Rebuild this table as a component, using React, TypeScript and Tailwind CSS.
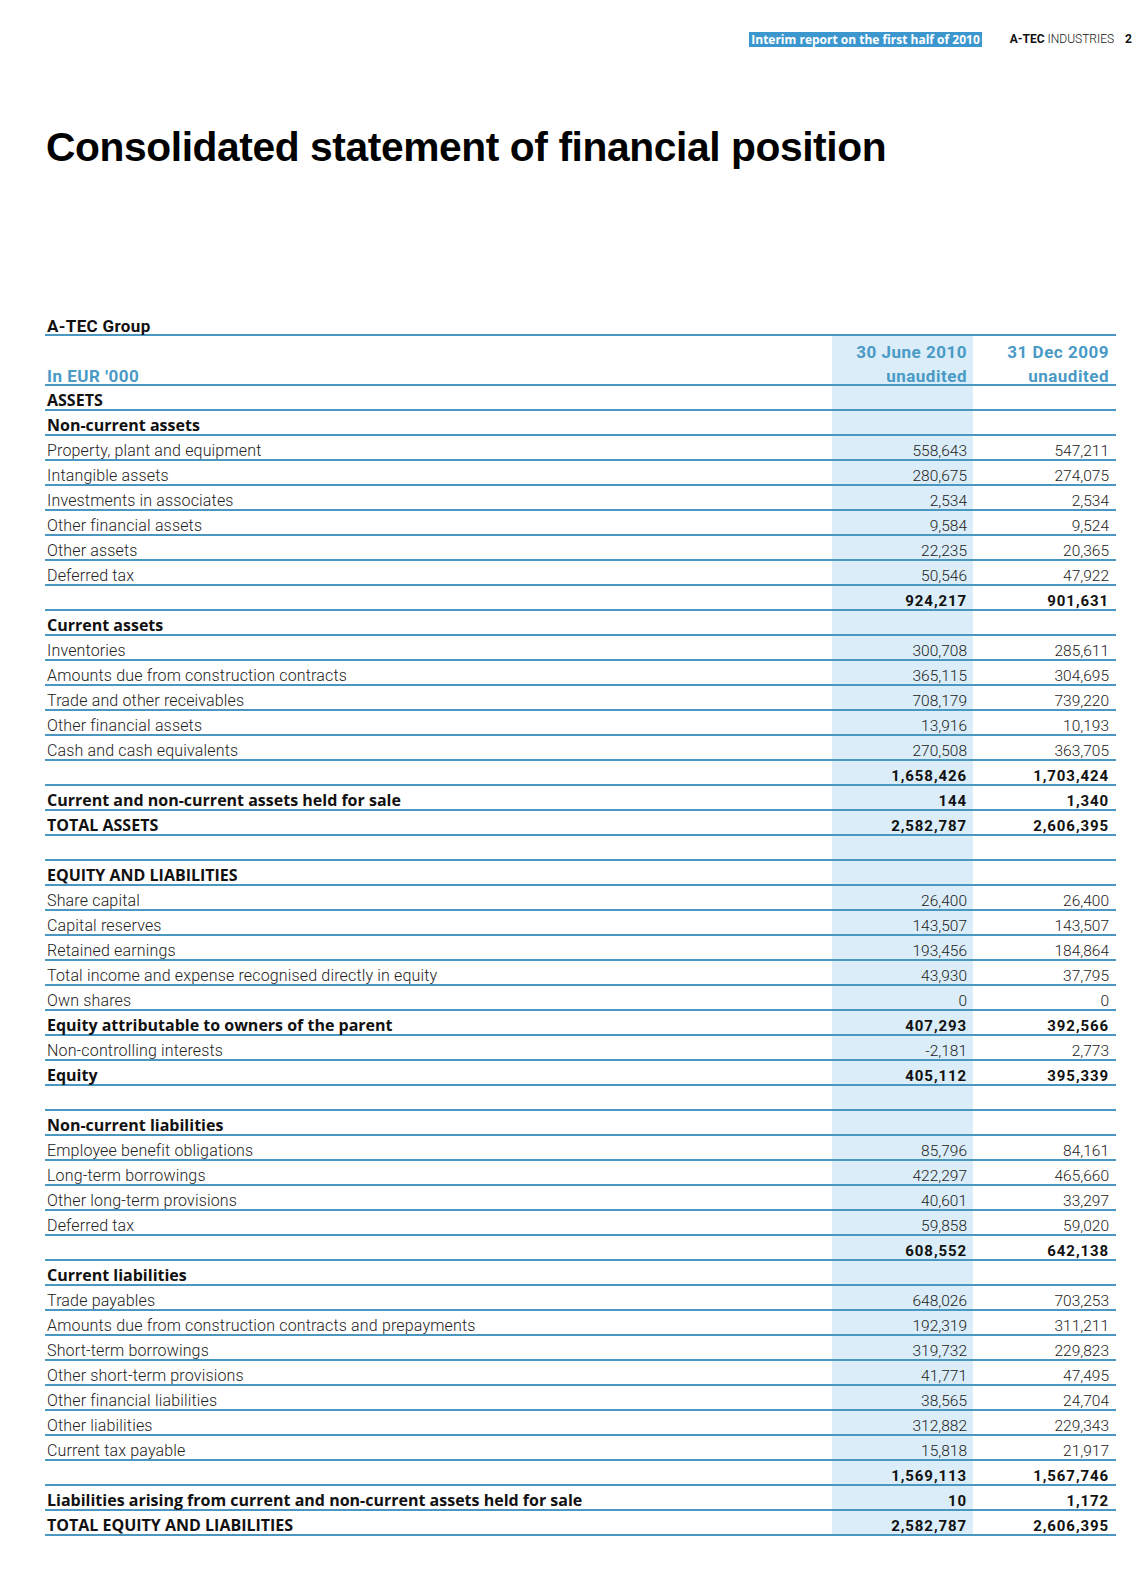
type RowKind = "head" | "item" | "sub" | "bold" | "blank";

interface Row {
  kind: RowKind;
  label?: string;
  a?: string;
  b?: string;
}

const rows: Row[] = [
  { kind: "head", label: "ASSETS" },
  { kind: "head", label: "Non-current assets" },
  { kind: "item", label: "Property, plant and equipment", a: "558,643", b: "547,211" },
  { kind: "item", label: "Intangible assets", a: "280,675", b: "274,075" },
  { kind: "item", label: "Investments in associates", a: "2,534", b: "2,534" },
  { kind: "item", label: "Other financial assets", a: "9,584", b: "9,524" },
  { kind: "item", label: "Other assets", a: "22,235", b: "20,365" },
  { kind: "item", label: "Deferred tax", a: "50,546", b: "47,922" },
  { kind: "sub", a: "924,217", b: "901,631" },
  { kind: "head", label: "Current assets" },
  { kind: "item", label: "Inventories", a: "300,708", b: "285,611" },
  { kind: "item", label: "Amounts due from construction contracts", a: "365,115", b: "304,695" },
  { kind: "item", label: "Trade and other receivables", a: "708,179", b: "739,220" },
  { kind: "item", label: "Other financial assets", a: "13,916", b: "10,193" },
  { kind: "item", label: "Cash and cash equivalents", a: "270,508", b: "363,705" },
  { kind: "sub", a: "1,658,426", b: "1,703,424" },
  { kind: "bold", label: "Current and non-current assets held for sale", a: "144", b: "1,340" },
  { kind: "bold", label: "TOTAL ASSETS", a: "2,582,787", b: "2,606,395" },
  { kind: "blank" },
  { kind: "head", label: "EQUITY AND LIABILITIES" },
  { kind: "item", label: "Share capital", a: "26,400", b: "26,400" },
  { kind: "item", label: "Capital reserves", a: "143,507", b: "143,507" },
  { kind: "item", label: "Retained earnings", a: "193,456", b: "184,864" },
  { kind: "item", label: "Total income and expense recognised directly in equity", a: "43,930", b: "37,795" },
  { kind: "item", label: "Own shares", a: "0", b: "0" },
  { kind: "bold", label: "Equity attributable to owners of the parent", a: "407,293", b: "392,566" },
  { kind: "item", label: "Non-controlling interests", a: "-2,181", b: "2,773" },
  { kind: "bold", label: "Equity", a: "405,112", b: "395,339" },
  { kind: "blank" },
  { kind: "head", label: "Non-current liabilities" },
  { kind: "item", label: "Employee benefit obligations", a: "85,796", b: "84,161" },
  { kind: "item", label: "Long-term borrowings", a: "422,297", b: "465,660" },
  { kind: "item", label: "Other long-term provisions", a: "40,601", b: "33,297" },
  { kind: "item", label: "Deferred tax", a: "59,858", b: "59,020" },
  { kind: "sub", a: "608,552", b: "642,138" },
  { kind: "head", label: "Current liabilities" },
  { kind: "item", label: "Trade payables", a: "648,026", b: "703,253" },
  { kind: "item", label: "Amounts due from construction contracts and prepayments", a: "192,319", b: "311,211" },
  { kind: "item", label: "Short-term borrowings", a: "319,732", b: "229,823" },
  { kind: "item", label: "Other short-term provisions", a: "41,771", b: "47,495" },
  { kind: "item", label: "Other financial liabilities", a: "38,565", b: "24,704" },
  { kind: "item", label: "Other liabilities", a: "312,882", b: "229,343" },
  { kind: "item", label: "Current tax payable", a: "15,818", b: "21,917" },
  { kind: "sub", a: "1,569,113", b: "1,567,746" },
  { kind: "bold", label: "Liabilities arising from current and non-current assets held for sale", a: "10", b: "1,172" },
  { kind: "bold", label: "TOTAL EQUITY AND LIABILITIES", a: "2,582,787", b: "2,606,395" },
];

function TableRow({ row }: { row: Row }) {
  const boldLabel = row.kind === "head" || row.kind === "bold";
  const boldNum = row.kind === "sub" || row.kind === "bold";
  const labelCls = boldLabel
    ? "pb-[2px] font-['Open_Sans',sans-serif] text-[16px] font-bold text-[#111]"
    : "pb-[1px] text-[16px] font-light tracking-[0.01em] text-[#222]";
  const numCls = boldNum
    ? "pb-[1px] text-[15px] font-bold tracking-[0.06em] text-[#111]"
    : "pb-[1px] text-[15.5px] font-light text-[#222]";

  return (
    <div className="grid h-[25px] grid-cols-[787px_141px_143px] border-b-2 border-[#4a98c2] leading-[14px]">
      <div className={`flex items-end whitespace-nowrap pl-[2px] ${labelCls}`}>
        {row.label}
      </div>
      <div className={`flex items-end justify-end bg-[#daedf8] pr-[6px] ${numCls}`}>
        {row.a}
      </div>
      <div className={`flex items-end justify-end pr-[7px] ${numCls}`}>
        {row.b}
      </div>
    </div>
  );
}

export default function App() {
  return (
    <div className="relative h-[1593px] w-[1132px] overflow-hidden bg-white font-['Roboto',sans-serif]">
      {/* running header */}
      <div className="flex items-center justify-end pt-[32px] text-[12px] leading-[15px]">
        <span className="bg-[#3d97cf] px-[2px] font-['Open_Sans',sans-serif] font-bold text-white">
          Interim report on the first half of 2010
        </span>
        <span className="ml-[28px] whitespace-nowrap text-[#111]">
          <span className="font-bold">A-TEC</span>{" "}
          <span className="font-light">INDUSTRIES</span>
        </span>
        <span className="ml-[11px] font-bold text-[#111]">2</span>
      </div>

      <h1 className="ml-[46px] mt-[80px] font-['Liberation_Sans',sans-serif] text-[40.75px] font-bold leading-[40px] tracking-[-0.01em] text-black">
        Consolidated statement of financial position
      </h1>

      <div className="ml-[45px] mt-[144px] w-[1071px]">
        <div className="flex h-[25px] items-end border-b-2 border-[#4a98c2] pl-[2px] text-[17px] font-bold leading-[16px] tracking-[0.02em] text-[#111]">
          A-TEC Group
        </div>
        <div className="grid h-[50px] grid-cols-[787px_141px_143px] border-b-2 border-[#4a98c2] text-[17px] font-bold leading-[24px] tracking-[0.03em] text-[#4a9ac6]">
          <div className="flex items-end pl-[2px]">
            <span className="relative top-[4px]">In EUR '000</span>
          </div>
          <div className="flex flex-col items-end justify-end bg-[#daedf8] pr-[6px]">
            <span className="relative top-[4px]">30 June 2010</span>
            <span className="relative top-[4px]">unaudited</span>
          </div>
          <div className="flex flex-col items-end justify-end pr-[7px]">
            <span className="relative top-[4px]">31 Dec 2009</span>
            <span className="relative top-[4px]">unaudited</span>
          </div>
        </div>
        {rows.map((row, i) => (
          <TableRow key={i} row={row} />
        ))}
      </div>
    </div>
  );
}
